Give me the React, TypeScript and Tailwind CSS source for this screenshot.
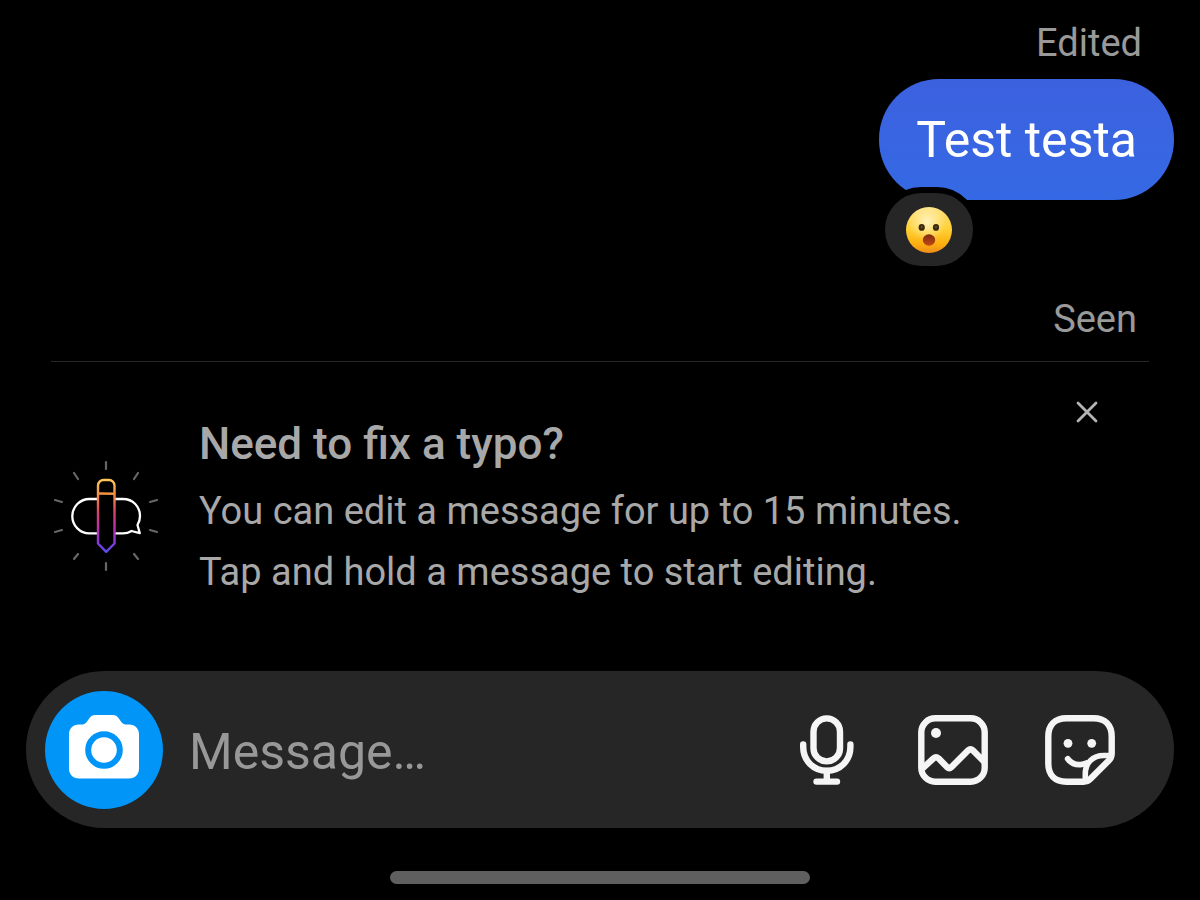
import { useState } from 'react';

const rays = [
  'M53 2V9',
  'M53 103V110',
  'M21 13L25 19',
  'M85 13L81 19',
  'M2 40L9 42',
  'M104 40L97 42',
  'M2 72L9 70',
  'M104 72L97 70',
  'M21 99L25 94',
  'M85 99L81 94',
];

function EditIllustration() {
  return (
    <svg viewBox="0 0 106 112" className="w-[106px] h-[112px] shrink-0" fill="none" aria-hidden="true">
      <defs>
        <linearGradient id="pencil" x1="53" y1="20" x2="53" y2="92" gradientUnits="userSpaceOnUse">
          <stop offset="0" stopColor="#fdc65a" />
          <stop offset="0.22" stopColor="#f58b3e" />
          <stop offset="0.45" stopColor="#dd3f6c" />
          <stop offset="0.7" stopColor="#b82cb4" />
          <stop offset="0.9" stopColor="#7a3de0" />
          <stop offset="1" stopColor="#5b4ce8" />
        </linearGradient>
      </defs>
      <g stroke="#666" strokeWidth="2.200" strokeLinecap="round">
        {rays.map((d) => (
          <path key={d} d={d} />
        ))}
      </g>
      <g stroke="#fff" strokeWidth="2.300" strokeLinejoin="round">
        <path d="M44 39H36.500A17.200 17.200 0 0 0 36.500 73.400H44" />
        <path d="M62 39H70C80 39 87 46.500 87 56C87 59.500 86 62.500 84.500 65L86.800 73.200L78.500 71C76 72.600 73.500 73.400 70 73.400H62" />
      </g>
      <g stroke="url(#pencil)" strokeWidth="2.400" strokeLinejoin="round">
        <path d="M45 83.500V25.500A5.500 5.500 0 0 1 50.500 20H56A5.500 5.500 0 0 1 61.500 25.500V83.500L53.200 91.800Z" />
        <path d="M45 33.500L61.500 33.700" />
      </g>
    </svg>
  );
}

function SurprisedFace() {
  return (
    <svg viewBox="0 0 46 46" className="w-[46px] h-[46px]" aria-hidden="true">
      <defs>
        <linearGradient id="face" x1="23" y1="0" x2="23" y2="46" gradientUnits="userSpaceOnUse">
          <stop offset="0" stopColor="#ffe07a" />
          <stop offset="0.5" stopColor="#ffcf33" />
          <stop offset="0.8" stopColor="#fdb010" />
          <stop offset="1" stopColor="#f08c1c" />
        </linearGradient>
        <radialGradient id="shine" cx="21" cy="15" r="19" gradientUnits="userSpaceOnUse">
          <stop offset="0" stopColor="#fff6c8" stopOpacity="0.9" />
          <stop offset="1" stopColor="#fff6c8" stopOpacity="0" />
        </radialGradient>
        <linearGradient id="mouth" x1="23" y1="27" x2="23" y2="39" gradientUnits="userSpaceOnUse">
          <stop offset="0" stopColor="#7c2a0c" />
          <stop offset="1" stopColor="#c4481c" />
        </linearGradient>
      </defs>
      <circle cx="23" cy="23" r="23" fill="url(#face)" />
      <circle cx="23" cy="23" r="23" fill="url(#shine)" />
      <ellipse cx="15.700" cy="20.400" rx="3.100" ry="3.400" fill="#3c2a10" />
      <ellipse cx="30" cy="20.400" rx="3.100" ry="3.400" fill="#3c2a10" />
      <circle cx="15.700" cy="20" r="0.800" fill="#8f7444" />
      <circle cx="30" cy="20" r="0.800" fill="#8f7444" />
      <ellipse cx="23" cy="33" rx="6.200" ry="5.800" fill="url(#mouth)" />
    </svg>
  );
}

function CameraIcon() {
  return (
    <svg viewBox="0 0 70 64" className="w-[70px] h-16" aria-hidden="true">
      <path
        d="M26 0H44C46.500 0 48 1 49.500 3L52 6.500C53.500 8.800 55.500 9.600 58 9.600H60C66 9.600 70 13.500 70 19.500V53.500C70 59.500 66 63.500 60 63.500H10C4 63.500 0 59.500 0 53.500V19.500C0 13.500 4 9.600 10 9.600H12C14.500 9.600 16.500 8.800 18 6.500L20.500 3C22 1 23.500 0 26 0Z"
        fill="#fff"
      />
      <circle cx="35" cy="35" r="15.800" fill="#fff" stroke="#0095f6" strokeWidth="6" />
    </svg>
  );
}

function MicIcon() {
  return (
    <svg viewBox="0 0 54 70" className="w-[54px] h-[70px]" fill="none" stroke="currentColor" strokeWidth="6.400" strokeLinecap="round" aria-hidden="true">
      <rect x="13.500" y="3.400" width="26.500" height="43" rx="13.250" />
      <path d="M3.200 29.500V32C3.200 45.500 13.500 55.800 26.800 55.800S50.400 45.500 50.400 32V29.500" />
      <path d="M26.800 56V66.500M16.500 66.600H37" />
    </svg>
  );
}

function GalleryIcon() {
  return (
    <svg viewBox="0 0 70 70" className="w-[70px] h-[70px]" fill="none" stroke="currentColor" strokeWidth="6.400" strokeLinejoin="round" aria-hidden="true">
      <rect x="3.300" y="3.300" width="63.400" height="63.400" rx="14" />
      <path d="M4 54L15.500 43.300C17 42 19 42 20.500 43.300L29.500 52.500C30.500 53.500 32 53.500 33 52.500L50 35.500C51.500 34.200 53.500 34.200 55 35.500L66.500 47" />
      <circle cx="18" cy="18" r="5" fill="currentColor" stroke="none" />
    </svg>
  );
}

function StickerIcon() {
  return (
    <svg viewBox="0 0 70 70" className="w-[70px] h-[70px]" fill="none" stroke="currentColor" strokeWidth="6.400" strokeLinecap="round" strokeLinejoin="round" aria-hidden="true">
      <path d="M66.700 38.500V21.500C66.700 10 60 3.300 48.500 3.300H21.500C10 3.300 3.300 10 3.300 21.500V48.500C3.300 60 10 66.700 21.500 66.700H38.500C41.500 66.700 43.500 65.800 45.500 63.800L63.800 45.500C65.800 43.500 66.700 41.500 66.700 38.500Z" />
      <path d="M65.500 40.500H59C47.500 40.500 40.300 48 40.300 59V65.500" strokeWidth="5.600" />
      <path d="M22.700 43.800C26 48.300 30.500 50 35.500 49.600C38 49.400 40 48.800 41.500 48" strokeWidth="5.800" />
      <circle cx="23" cy="28.300" r="4.400" fill="currentColor" stroke="none" />
      <circle cx="46.700" cy="28.300" r="4.400" fill="currentColor" stroke="none" />
    </svg>
  );
}

export default function App() {
  const [message, setMessage] = useState('');
  const [showTip, setShowTip] = useState(true);

  return (
    <div className="min-h-screen bg-black flex flex-col font-[Roboto,sans-serif] text-[#a8a8a8]">
      {/* Conversation */}
      <main className="flex flex-col items-end pt-5 px-[26px]">
        <p className="text-[38px] leading-[46px] pr-8 text-[#999]">Edited</p>
        <div className="relative mt-[13px]">
          <p className="rounded-[60px] bg-linear-to-b from-[#3c61df] to-[#3569e4] px-[37px] pt-[31px] pb-[29px] text-[50px] leading-[61px] text-white whitespace-nowrap">
            Test testa
          </p>
          <button
            aria-label="Surprised reaction"
            className="absolute left-0 top-[108px] w-[100px] h-[85px] rounded-full border-6 border-black bg-[#262626] flex items-center justify-center cursor-pointer"
          >
            <SurprisedFace />
          </button>
        </div>
        <p className="text-[38px] leading-[46px] pr-[37px] mt-24 text-[#999]">Seen</p>
      </main>

      {/* Edit tip */}
      {showTip && (
        <section className="mt-[19px] mx-[51px] border-t border-[#262626] pt-[52px] flex items-start gap-10 pl-[2px]">
          <div className="pt-[46px]">
            <EditIllustration />
          </div>
          <div className="flex-1">
            <h2 className="text-[44px] leading-[61px] font-medium">Need to fix a typo?</h2>
            <p className="text-[38px] leading-[61px] mt-[6px]">
              You can edit a message for up to 15 minutes.
              <br />
              Tap and hold a message to start editing.
            </p>
          </div>
          <button
            aria-label="Close"
            onClick={() => setShowTip(false)}
            className="w-12 h-12 -mt-[26px] mr-[38px] flex items-center justify-center cursor-pointer"
          >
            <svg viewBox="0 0 22 22" className="w-[22px] h-[22px]" fill="none" stroke="#b4b4b4" strokeWidth="2.800" strokeLinecap="round">
              <path d="M2 2L20 20M20 2L2 20" />
            </svg>
          </button>
        </section>
      )}

      {/* Composer */}
      <footer className="mt-auto px-[26px] pb-4">
        <div className="rounded-full bg-[#262626] h-[157px] pl-[19px] pr-[59px] flex items-center">
          <button aria-label="Camera" className="w-[118px] h-[118px] pb-[6px] shrink-0 rounded-full bg-[#0095f6] flex items-center justify-center cursor-pointer">
            <CameraIcon />
          </button>
          <input
            type="text"
            aria-label="Message"
            placeholder="Message…"
            value={message}
            onChange={(e) => setMessage(e.target.value)}
            className="flex-1 min-w-0 ml-[26px] pt-[6px] bg-transparent text-[50px] leading-[61px] text-white placeholder:text-[#989898] outline-none"
          />
          <div className="flex items-center text-[#f5f5f5]">
            <button aria-label="Voice message" className="cursor-pointer">
              <MicIcon />
            </button>
            <button aria-label="Gallery" className="ml-16 cursor-pointer">
              <GalleryIcon />
            </button>
            <button aria-label="Stickers" className="ml-[57px] cursor-pointer">
              <StickerIcon />
            </button>
          </div>
        </div>
        <div className="mx-auto mt-[43px] w-[420px] h-[13px] rounded-full bg-[#5f5f5f]" />
      </footer>
    </div>
  );
}
